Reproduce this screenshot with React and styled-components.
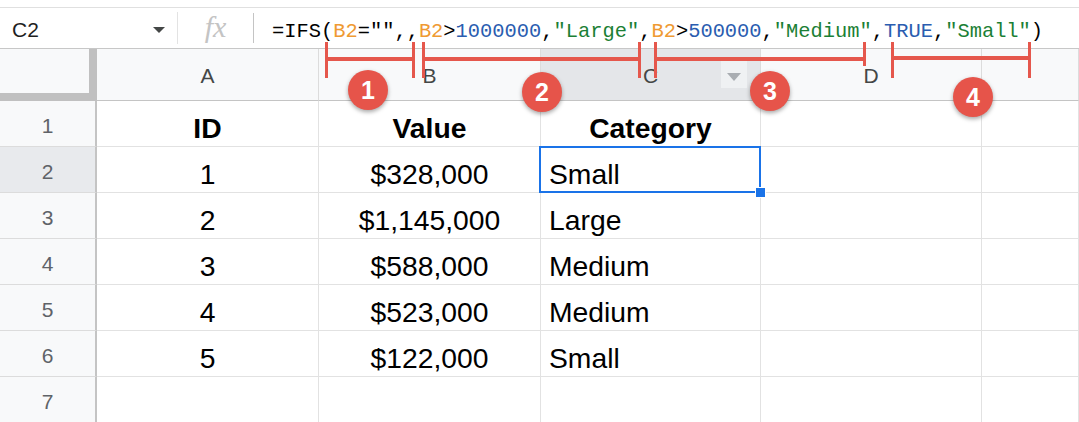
import React from 'react';
import styled, { createGlobalStyle } from 'styled-components';

const Global = createGlobalStyle`
  html, body {
    margin: 0;
    padding: 0;
    background: #fff;
    overflow: hidden;
  }
`;

const Page = styled.div`
  position: relative;
  width: 1079px;
  height: 422px;
  overflow: hidden;
  background: #fff;
  font-family: "Liberation Sans", Arial, sans-serif;
`;

const TopStrip = styled.div`
  height: 7px;
  border-bottom: 1px solid #e0e0e0;
`;

const FormulaBar = styled.div`
  display: flex;
  align-items: center;
  height: 40px;
  border-bottom: 1px solid #c7c7c7;
`;

const NameBox = styled.div`
  display: flex;
  align-items: center;
  justify-content: space-between;
  width: 177px;
  box-sizing: border-box;
  padding: 3px 12px 0 12px;
  font-size: 21px;
  color: #1f1f1f;
`;

const Caret = styled.span`
  width: 0;
  height: 0;
  margin-top: 0;
  border-left: 6px solid transparent;
  border-right: 6px solid transparent;
  border-top: 6px solid #444746;
`;

const Divider = styled.div`
  width: 1px;
  height: ${p => p.$h || 32}px;
  background: ${p => p.$c || '#e3e3e3'};
`;

const Fx = styled.div`
  width: 75px;
  text-align: center;
  font-family: "Liberation Serif", "Times New Roman", serif;
  font-style: italic;
  font-size: 30px;
  color: #c4c4c4;
  line-height: 1;
  padding-bottom: 2px;
`;

const Formula = styled.div`
  margin-left: 18px;
  font-family: "Liberation Mono", "DejaVu Sans Mono", monospace;
  font-size: 20.4px;
  white-space: pre;
  color: #000;
  padding-top: 6px;
`;

const tokenColors = {
  p: '#000',
  ref: '#ef9a33',
  num: '#2a5db0',
  str: '#1b7f35',
};

const Tok = styled.span`
  color: ${p => tokenColors[p.$k]};
`;

const Grid = styled.div`
  display: grid;
  grid-template-columns: 97px 222px 222px 220px 221px 1fr;
  grid-auto-rows: 46px;
  grid-template-rows: 52px;
`;

const Corner = styled.div`
  background: #f8f9fa;
  border-right: 8px solid #c0c0c0;
  border-bottom: 8px solid #c0c0c0;
  box-sizing: border-box;
`;

const ColHead = styled.div`
  position: relative;
  display: flex;
  align-items: center;
  justify-content: center;
  box-sizing: border-box;
  background: ${p => (p.$active ? '#e4e6e9' : '#f8f9fa')};
  border-right: 1px solid #dcdcdc;
  border-bottom: 1px solid #c4c4c4;
  font-size: 21px;
  color: #444746;
  padding-top: 2px;
`;

const HeadMenu = styled.div`
  position: absolute;
  right: 13px;
  top: 11px;
  width: 26px;
  height: 28px;
  background: #eff1f3;
  display: flex;
  align-items: center;
  justify-content: center;
  &::after {
    content: '';
    margin-top: 6px;
    border-left: 7px solid transparent;
    border-right: 7px solid transparent;
    border-top: 8px solid #a9adb2;
  }
`;

const RowHead = styled.div`
  display: flex;
  align-items: center;
  justify-content: center;
  box-sizing: border-box;
  background: ${p => (p.$active ? '#e8eaed' : '#f8f9fa')};
  border-right: 2px solid #c4c4c4;
  border-bottom: 1px solid #dcdcdc;
  font-size: 21px;
  color: #5f6368;
  padding-top: 4px;
`;

const Cell = styled.div`
  position: relative;
  display: flex;
  align-items: flex-end;
  justify-content: ${p => (p.$align === 'left' ? 'flex-start' : 'center')};
  box-sizing: border-box;
  padding: 0 0 4px ${p => (p.$align === 'left' ? '8px' : '0')};
  border-right: 1px solid #e2e2e2;
  border-bottom: 1px solid #e2e2e2;
  font-size: 28.3px;
  line-height: 1;
  font-weight: ${p => (p.$bold ? 700 : 400)};
  color: #000;
  ${p =>
    p.$selected &&
    `
    z-index: 2;
    &::after {
      content: '';
      position: absolute;
      left: -2px;
      top: -1px;
      right: -1px;
      bottom: -1px;
      border: 2px solid #1a73e8;
    }
    &::before {
      content: '';
      position: absolute;
      right: -6px;
      bottom: -6px;
      width: 9px;
      height: 9px;
      background: #1a73e8;
      border: 1px solid #fff;
      z-index: 3;
    }
  `}
`;

const Bracket = styled.div`
  position: absolute;
  top: 42px;
  left: ${p => p.$x}px;
  width: ${p => p.$w}px;
  height: 36px;
  &::before,
  &::after {
    content: '';
    position: absolute;
    top: 0;
    width: 3px;
    background: #e5574c;
  }
  &::before {
    left: 0;
    height: 36px;
  }
  &::after {
    right: 0;
    height: ${p => p.$rh || 36}px;
  }
`;

const BracketBar = styled.div`
  position: absolute;
  left: 0;
  right: 0;
  top: ${p => p.$y || 15}px;
  height: 4px;
  background: #e5574c;
`;

const Badge = styled.div`
  position: absolute;
  left: ${p => p.$x - 20}px;
  top: ${p => p.$y - 20}px;
  width: 40px;
  height: 40px;
  border-radius: 50%;
  background: #e6544a;
  box-shadow: 0 2px 4px rgba(0, 0, 0, 0.35);
  color: #fff;
  font-weight: 700;
  font-size: 25px;
  display: flex;
  align-items: center;
  justify-content: center;
  z-index: 5;
`;

const Overlay = styled.div`
  position: absolute;
  inset: 0;
  pointer-events: none;
  z-index: 4;
`;

const formula = [
  ['=IFS(', 'p'],
  ['B2', 'ref'],
  ['=""', 'p'],
  [',,', 'p'],
  ['B2', 'ref'],
  ['>', 'p'],
  ['1000000', 'num'],
  [',', 'p'],
  ['"Large"', 'str'],
  [',', 'p'],
  ['B2', 'ref'],
  ['>', 'p'],
  ['500000', 'num'],
  [',', 'p'],
  ['"Medium"', 'str'],
  [',', 'p'],
  ['TRUE', 'num'],
  [',', 'p'],
  ['"Small"', 'str'],
  [')', 'p'],
];

const columns = ['A', 'B', 'C', 'D', ''];

const rows = [
  ['ID', 'Value', 'Category'],
  ['1', '$328,000', 'Small'],
  ['2', '$1,145,000', 'Large'],
  ['3', '$588,000', 'Medium'],
  ['4', '$523,000', 'Medium'],
  ['5', '$122,000', 'Small'],
  ['', '', ''],
];

const brackets = [
  { x: 325, w: 90 },
  { x: 422, w: 219 },
  { x: 654, w: 212, rh: 24 },
  { x: 891, w: 140, y: 14 },
];

const badges = [
  { n: 1, x: 368, y: 90 },
  { n: 2, x: 542, y: 92 },
  { n: 3, x: 770, y: 91 },
  { n: 4, x: 973, y: 97 },
];

export default function App() {
  return (
    <Page>
      <Global />
      <TopStrip />
      <FormulaBar>
        <NameBox>
          C2
          <Caret />
        </NameBox>
        <Divider />
        <Fx>fx</Fx>
        <Divider $h={30} $c="#c4c4c4" />
        <Formula>
          {formula.map(([t, k], i) => (
            <Tok key={i} $k={k}>{t}</Tok>
          ))}
        </Formula>
      </FormulaBar>
      <Grid>
        <Corner />
        {columns.map((c, i) => (
          <ColHead key={i} $active={c === 'C'}>
            {c}
            {c === 'C' && <HeadMenu />}
          </ColHead>
        ))}
        {rows.map((r, ri) => (
          <React.Fragment key={ri}>
            <RowHead $active={ri === 1}>{ri + 1}</RowHead>
            <Cell $bold={ri === 0}>{r[0]}</Cell>
            <Cell $bold={ri === 0}>{r[1]}</Cell>
            <Cell $bold={ri === 0} $align={ri === 0 ? 'center' : 'left'} $selected={ri === 1}>
              {r[2]}
            </Cell>
            <Cell />
            <Cell />
          </React.Fragment>
        ))}
      </Grid>
      <Overlay>
        {brackets.map((b, i) => (
          <Bracket key={i} $x={b.x} $w={b.w} $rh={b.rh}>
            <BracketBar $y={b.y} />
          </Bracket>
        ))}
        {badges.map(b => (
          <Badge key={b.n} $x={b.x} $y={b.y}>{b.n}</Badge>
        ))}
      </Overlay>
    </Page>
  );
}
